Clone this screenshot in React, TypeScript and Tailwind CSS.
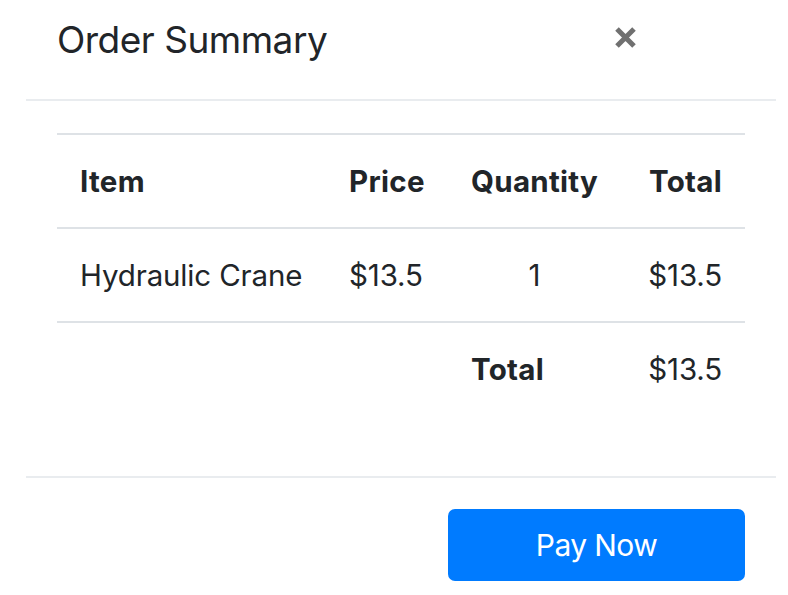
import React from "react";

export default function App() {
  const font = { fontFamily: 'Inter, "Noto Sans", sans-serif' };
  return (
    <div className="w-[788px] h-[595px] bg-white text-[#212529] flex flex-col" style={font}>
      <div className="ml-[26px] w-[750px] h-[101px] border-b-2 border-[#e9ecef] flex items-start justify-between pl-[31px] pr-[139px] pt-[18px]">
        <h5 className="text-[37px] leading-[44px] font-normal tracking-[-0.5px]">Order Summary</h5>
        <svg width="23" height="23" viewBox="0 0 23 23" className="mt-[8px]">
          <path d="M3 3 L20 20 M20 3 L3 20" stroke="#707070" strokeWidth="5" strokeLinecap="butt" />
        </svg>
      </div>
      <div className="ml-[26px] w-[750px] h-[377px] border-b-2 border-[#e9ecef] pl-[31px] pr-[31px] pt-[32px]">
        <div className="grid grid-cols-[269px_122px_173px_124px] text-[29.5px]">
          <div className="col-span-4 grid grid-cols-subgrid h-[94px] items-center border-t-2 border-[#dee2e6] font-bold tracking-[0.3px]">
            <div className="pl-[23px]">Item</div>
            <div className="pl-[23px]">Price</div>
            <div className="pl-[23px]">Quantity</div>
            <div className="pr-[23px] text-right">Total</div>
          </div>
          <div className="col-span-4 grid grid-cols-subgrid h-[94px] items-center border-t-2 border-[#dee2e6] tracking-[-0.15px]">
            <div className="pl-[23px]">Hydraulic Crane</div>
            <div className="pl-[23px]">$13.5</div>
            <div className="pl-[23px] w-[150px] text-center">1</div>
            <div className="pr-[23px] text-right">$13.5</div>
          </div>
          <div className="col-span-4 grid grid-cols-subgrid h-[94px] items-center border-t-2 border-[#dee2e6]">
            <div></div>
            <div></div>
            <div className="pl-[23px] font-bold tracking-[0.3px]">Total</div>
            <div className="pr-[23px] text-right tracking-[-0.15px]">$13.5</div>
          </div>
        </div>
      </div>
      <div className="ml-[26px] w-[750px] flex justify-end pr-[31px] pt-[31px]">
        <button className="w-[297px] h-[72px] bg-[#007bff] rounded-[7px] text-white text-[30px] leading-none tracking-[-0.6px] flex items-center justify-center">
          Pay Now
        </button>
      </div>
    </div>
  );
}
